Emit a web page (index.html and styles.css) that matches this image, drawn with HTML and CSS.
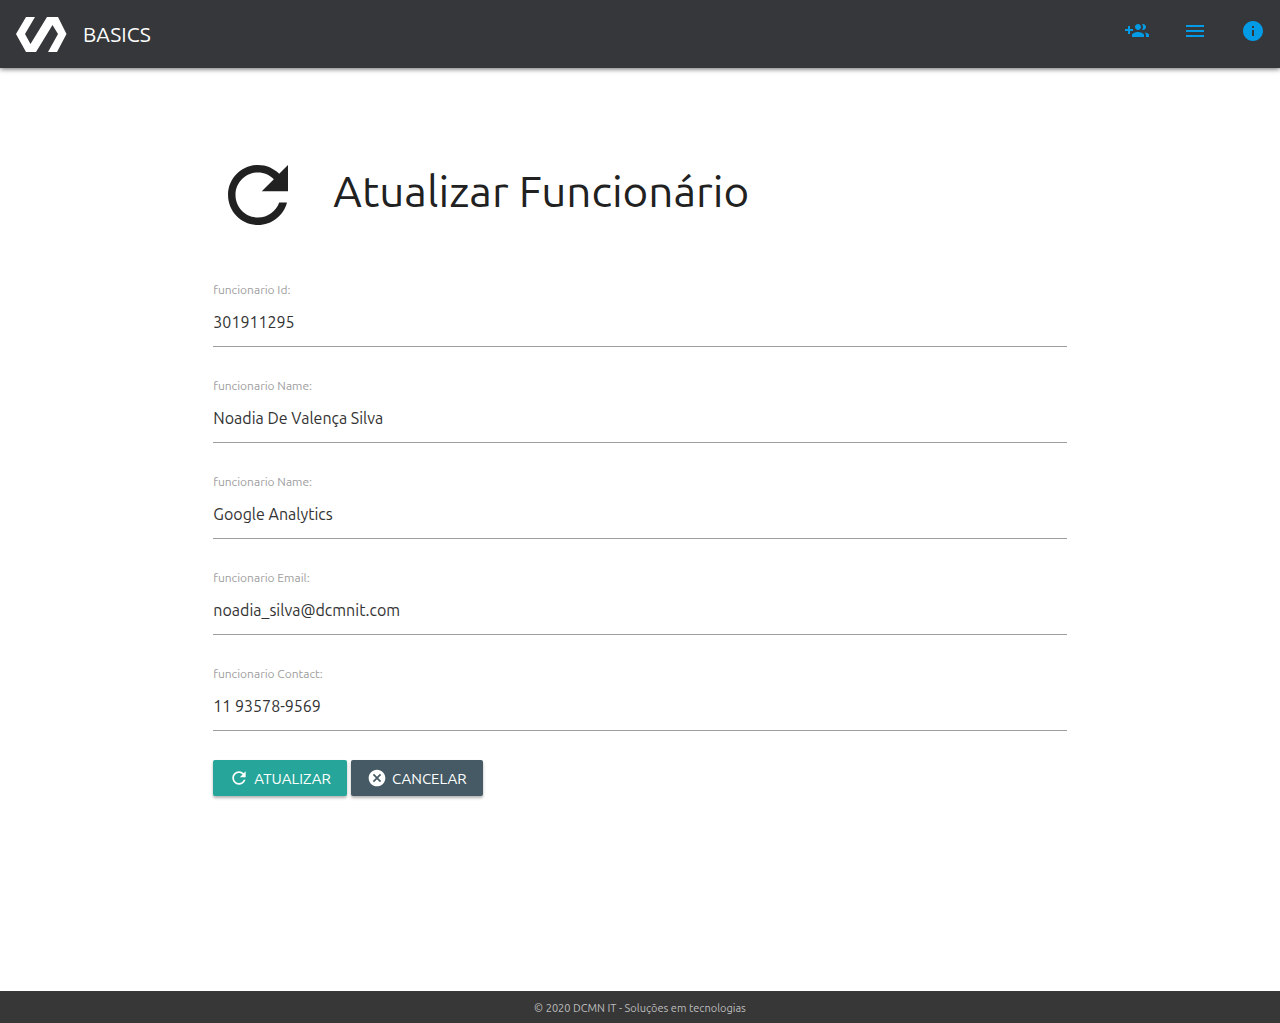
FILE: index.html
```html
<!DOCTYPE html>
<html lang="pt-BR">
<head>
<meta charset="utf-8">
<meta name="viewport" content="width=device-width, initial-scale=1">
<title>Atualizar Funcionário</title>
<link rel="stylesheet" href="styles.css">
</head>
<body>
<header class="navbar">
  <a class="brand" href="#">
    <svg class="logo" viewBox="0 0 51 36" aria-hidden="true"><path d="M10 1h9L9 18l5.500 10L31 1h11l8.500 17L41 36h-9l10-18-5.500-9L20 36H10L0 18z"/></svg>
    <span class="brand-name">BASICS</span>
  </a>
  <nav class="nav-links">
    <a class="nav-link" href="#" aria-label="Adicionar funcionário"><svg class="icon" viewBox="0 0 24 24"><path d="M8 10H5V7H3v3H0v2h3v3h2v-3h3v-2zm10 1c1.660 0 2.990-1.340 2.990-3S19.660 5 18 5c-.320 0-.630.050-.910.140.570.810.900 1.790.900 2.860s-.340 2.040-.900 2.860c.280.090.590.140.910.140zm-5 0c1.660 0 2.990-1.340 2.990-3S14.660 5 13 5c-1.660 0-3 1.340-3 3s1.340 3 3 3zm6.620 2.160c.830.730 1.380 1.660 1.380 2.840v2h3v-2c0-1.540-2.370-2.490-4.380-2.840zM13 13c-2 0-6 1-6 3v2h12v-2c0-2-4-3-6-3z"/></svg></a>
    <a class="nav-link" href="#" aria-label="Menu"><svg class="icon" viewBox="0 0 24 24"><path d="M3 18h18v-2H3v2zm0-5h18v-2H3v2zm0-7v2h18V6H3z"/></svg></a>
    <a class="nav-link" href="#" aria-label="Informações"><svg class="icon" viewBox="0 0 24 24"><path d="M12 2C6.480 2 2 6.480 2 12s4.480 10 10 10 10-4.480 10-10S17.520 2 12 2zm1 15h-2v-6h2v6zm0-8h-2V7h2v2z"/></svg></a>
  </nav>
</header>
<main class="content">
  <div class="panel">
    <div class="heading">
      <svg class="heading-icon" viewBox="0 0 24 24" aria-hidden="true"><path d="M17.650 6.350C16.200 4.900 14.210 4 12 4c-4.420 0-7.990 3.580-7.990 8s3.570 8 7.990 8c3.730 0 6.840-2.550 7.730-6h-2.080c-.820 2.330-3.040 4-5.650 4-3.310 0-6-2.690-6-6s2.690-6 6-6c1.660 0 3.140.690 4.220 1.780L13 11h7V4l-2.350 2.350z"/></svg>
      <h1 class="title">Atualizar Funcionário</h1>
    </div>
    <form>
      <div class="fields">
        <div class="field"><label class="label" for="fid">funcionario Id:</label><input class="input" id="fid" type="text" value="301911295"></div>
        <div class="field"><label class="label" for="name">funcionario Name:</label><input class="input" id="name" type="text" value="Noadia De Valença Silva"></div>
        <div class="field"><label class="label" for="role">funcionario Name:</label><input class="input" id="role" type="text" value="Google Analytics"></div>
        <div class="field"><label class="label" for="email">funcionario Email:</label><input class="input" id="email" type="text" value="noadia_silva@dcmnit.com"></div>
        <div class="field"><label class="label" for="contact">funcionario Contact:</label><input class="input" id="contact" type="text" value="11 93578-9569"></div>
      </div>
      <div class="actions">
        <button class="button button-update" type="submit"><svg class="button-icon" viewBox="0 0 24 24" aria-hidden="true"><path d="M17.650 6.350C16.200 4.900 14.210 4 12 4c-4.420 0-7.990 3.580-7.990 8s3.570 8 7.990 8c3.730 0 6.840-2.550 7.730-6h-2.080c-.820 2.330-3.040 4-5.650 4-3.310 0-6-2.690-6-6s2.690-6 6-6c1.660 0 3.140.690 4.220 1.780L13 11h7V4l-2.350 2.350z"/></svg>ATUALIZAR</button>
        <button class="button button-cancel" type="button"><svg class="button-icon" viewBox="0 0 24 24" aria-hidden="true"><path d="M12 2C6.470 2 2 6.470 2 12s4.470 10 10 10 10-4.470 10-10S17.530 2 12 2zm5 13.590L15.590 17 12 13.410 8.410 17 7 15.590 10.590 12 7 8.410 8.410 7 12 10.590 15.590 7 17 8.410 13.410 12 17 15.590z"/></svg>CANCELAR</button>
      </div>
    </form>
  </div>
</main>
<footer class="footer">© 2020 DCMN IT - Soluções em tecnologias</footer>
</body>
</html>
```
FILE: styles.css
```css
* { box-sizing: border-box; }
body {
  margin: 0;
  min-height: 100vh;
  display: flex;
  flex-direction: column;
  background: #fff;
  color: #212121;
  font-family: Ubuntu, "Noto Sans", sans-serif;
}
svg { display: block; fill: currentColor; flex: none; }
.navbar {
  min-height: 68px;
  padding: 0 16px;
  display: flex;
  align-items: center;
  justify-content: space-between;
  background: #36373a;
  box-shadow: 0 1px 5px rgba(0, 0, 0, .6);
}
.brand {
  display: flex;
  align-items: center;
  gap: 16px;
  color: #fff;
  text-decoration: none;
}
.logo { width: 51px; height: 36px; }
.brand-name { font-size: 21px; line-height: 28px; }
.nav-links { display: flex; gap: 34px; padding-bottom: 6px; margin-right: -1px; }
.nav-link { color: #039be5; }
.icon { width: 24px; height: 24px; }
.content {
  flex: 1;
  display: grid;
  grid-template-columns: 1fr 4fr 1fr;
  padding: 82px 0 64px;
}
.panel { grid-column: 2; min-width: 0; }
.heading { display: flex; align-items: center; gap: 30px; }
.heading-icon { width: 90px; height: 90px; }
.title { margin: 0; padding-bottom: 8px; font-size: 44px; font-weight: 400; line-height: 54px; }
.fields { display: flex; flex-direction: column; gap: 30px; margin-top: 41px; }
.field { display: flex; flex-direction: column; }
.label { color: #9e9e9e; font-size: 12px; line-height: 18px; }
.input {
  width: 100%;
  height: 48px;
  padding: 0 0 2px;
  border: 0;
  border-bottom: 1px solid #9e9e9e;
  background: transparent;
  color: #333;
  font: inherit;
  font-size: 16px;
  outline: 0;
}
.actions { display: flex; flex-wrap: wrap; gap: 4px; margin-top: 29px; }
.button {
  height: 36px;
  padding: 0 16px;
  display: flex;
  align-items: center;
  gap: 5px;
  border: 0;
  border-radius: 2px;
  color: #fff;
  font: inherit;
  font-size: 15px;
  box-shadow: 0 2px 3px rgba(0, 0, 0, .3);
}
.button-update { background: #26a69a; }
.button-cancel { background: #455a64; }
.button-icon { width: 20px; height: 20px; }
.footer {
  padding: 9px 16px 7px;
  background: #373737;
  color: #bdbdbd;
  font-size: 11px;
  line-height: 16px;
  text-align: center;
}
```
